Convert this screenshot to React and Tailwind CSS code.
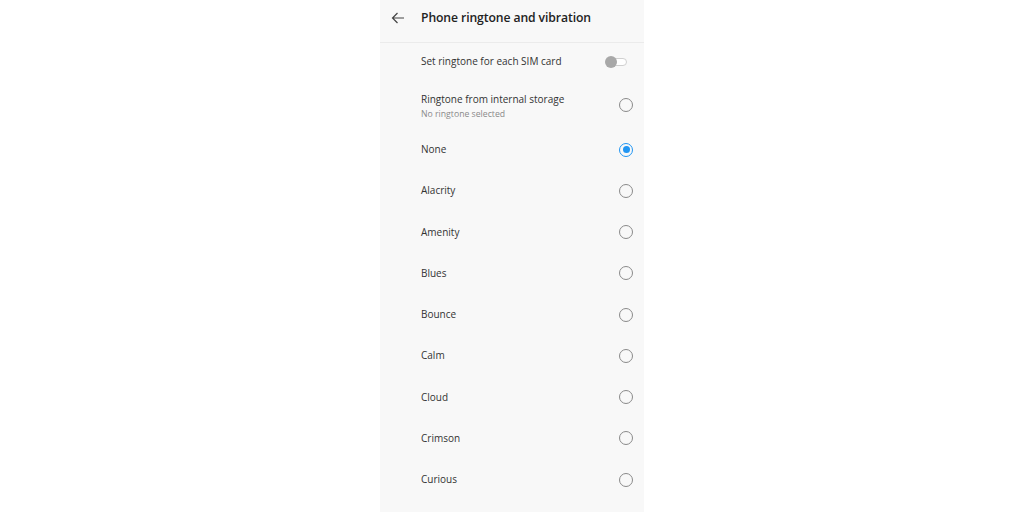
import React from "react";

const items = ["None", "Alacrity", "Amenity", "Blues", "Bounce", "Calm", "Cloud", "Crimson", "Curious"];

function Radio({ checked }) {
  if (checked) {
    return (
      <div className="w-[14px] h-[14px] rounded-full border-[1.5px] border-[#2196f3] flex items-center justify-center">
        <div className="w-[7px] h-[7px] rounded-full bg-[#2196f3]" />
      </div>
    );
  }
  return <div className="w-[14px] h-[14px] rounded-full border-[1.5px] border-[#8a8a8a]" />;
}

export default function App() {
  return (
    <div className="w-[1024px] h-[512px] bg-white flex justify-center overflow-hidden" style={{ fontFamily: '"Open Sans", "Noto Sans", sans-serif' }}>
      <div className="w-[264px] h-full bg-[#f8f8f8] flex flex-col">
        <div className="h-[43px] flex items-center pb-[6px] border-b border-[#ebebeb] shrink-0">
          <div className="w-[41px] flex justify-start pl-[11px]">
            <svg width="14" height="12" viewBox="0 0 14 12" fill="none" stroke="#444" strokeWidth="1.2">
              <path d="M13 6H1.5M6.5 1L1.5 6l5 5" />
            </svg>
          </div>
          <div className="text-[12.2px] font-semibold text-[#222] tracking-[-0.1px]">Phone ringtone and vibration</div>
        </div>
        <div className="h-[37px] flex items-center pl-[41px] pr-[16px] justify-between shrink-0">
          <span className="text-[10px] text-[#333]">Set ringtone for each SIM card</span>
          <div className="relative w-[22px] h-[12px] mr-[1px]">
            <div className="absolute left-[4px] top-[2px] w-[18px] h-[8px] rounded-full border border-[#d0d0d0] bg-white" />
            <div className="absolute left-0 top-0 w-[12px] h-[12px] rounded-full bg-[#a8a8a8]" />
          </div>
        </div>
        <div className="h-[49px] flex items-center pl-[41px] pr-[11px] justify-between shrink-0">
          <div className="flex flex-col pt-[3px]">
            <span className="text-[10px] text-[#333] leading-[14px]">Ringtone from internal storage</span>
            <span className="text-[8.7px] text-[#8a8a8a] leading-[14px] mt-[1px]">No ringtone selected</span>
          </div>
          <Radio />
        </div>
        {items.map((it, i) => (
          <div key={it} className="h-[41.25px] flex items-center pl-[41px] pr-[11px] justify-between shrink-0">
            <span className="text-[10px] text-[#333]">{it}</span>
            <Radio checked={i === 0} />
          </div>
        ))}
      </div>
    </div>
  );
}
